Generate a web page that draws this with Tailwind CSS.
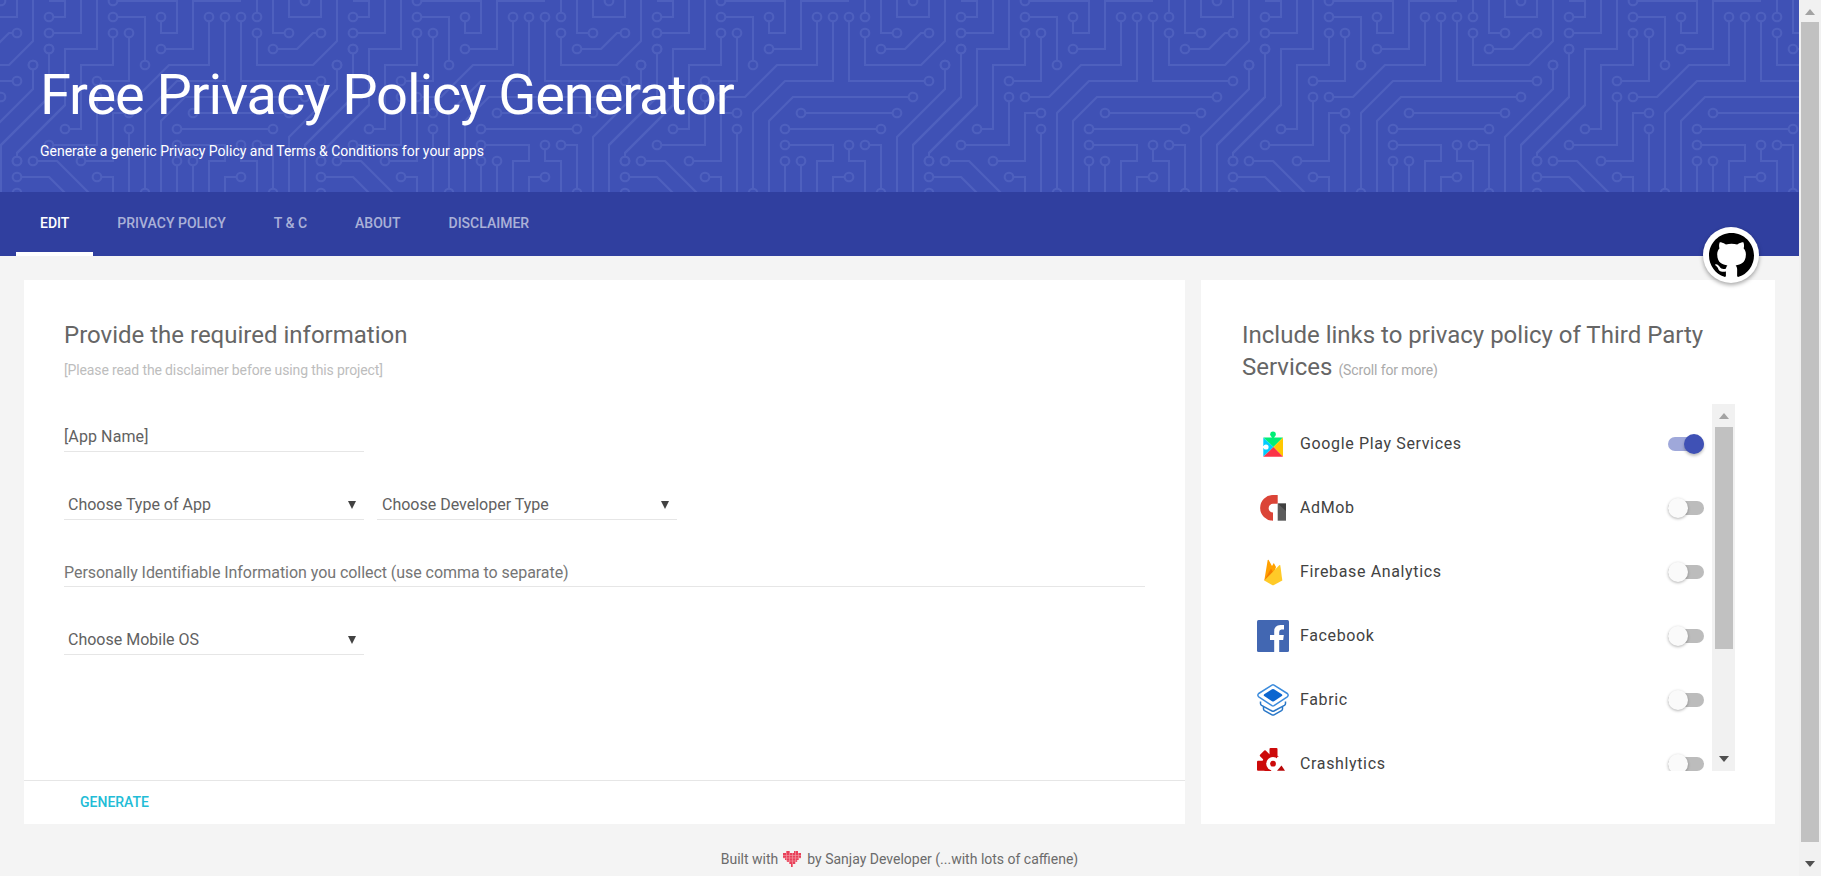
<!DOCTYPE html>
<html lang="en">
<head>
<meta charset="utf-8">
<title>Free Privacy Policy Generator</title>
<script src="https://cdn.jsdelivr.net/npm/@tailwindcss/browser@4"></script>
</head>
<body class="h-[876px] w-[1821px] overflow-hidden bg-[#f4f4f4] font-['Roboto',sans-serif] text-[#424242]">
<div class="flex h-[876px]">
  <div class="flex w-[1799px] shrink-0 flex-col">
    <header class="relative h-[192px] shrink-0 bg-[#3f51b5] px-10 pt-[71px] text-white">
      <svg class="absolute inset-0 h-full w-full">
        <defs>
          <g id="circuit" transform="translate(1 1) scale(16)" fill="none" stroke="#4e60be" stroke-width=".125">
            <path d="M3 0H4V1H3M7 0H11V2H10V1M15 0H12V3H10M16-1V1M17-1V2H18M18-1V1H20V-1M19-1V0M16 2V4H19.5L21 2.5V-1M20 2H19.5L18.5 3H17M3 2H5V-1M6-1V3H4V6.5L1 9.5V10M3 3V6L0 9V13M22 3V6L19 9V13M21 4V5.5L18 8.5V13M7 1H9V4M7 2V4H5V8H4M8 2V5H6M6 6V9H3M7 6H8.5L10.5 4H13V1M14 1V5H11L9 7V12M15 1V5H20M19 6H11.500L10 7.500V13M12 7H18M11 8H17M8 7H7V10H5M8 8V13M11 9H14V10H13V13M15 9V10H16V13M16 9H17V12M11 10V13M12 10V13M15 11H14V13M2 10H3.5L6.500 13M1 11H3L5 13M6 11H7V13M23 3V6.500L20 9.500V10"/>
            <g fill="#3f51b5">
              <circle cx="3" cy="1" r=".27"/><circle cx="7" cy="0" r=".27"/><circle cx="10" cy="1" r=".27"/><circle cx="10" cy="3" r=".27"/><circle cx="16" cy="1" r=".27"/><circle cx="18" cy="2" r=".27"/><circle cx="19" cy="0" r=".27"/><circle cx="16" cy="2" r=".27"/><circle cx="20" cy="2" r=".27"/><circle cx="17" cy="3" r=".27"/><circle cx="3" cy="2" r=".27"/><circle cx="1" cy="10" r=".27"/><circle cx="20" cy="10" r=".27"/><circle cx="3" cy="3" r=".27"/><circle cx="22" cy="3" r=".27"/><circle cx="21" cy="4" r=".27"/><circle cx="2" cy="4" r=".27"/><circle cx="7" cy="1" r=".27"/><circle cx="9" cy="4" r=".27"/><circle cx="7" cy="2" r=".27"/><circle cx="4" cy="8" r=".27"/><circle cx="8" cy="2" r=".27"/><circle cx="6" cy="5" r=".27"/><circle cx="6" cy="6" r=".27"/><circle cx="3" cy="9" r=".27"/><circle cx="7" cy="6" r=".27"/><circle cx="13" cy="1" r=".27"/><circle cx="14" cy="1" r=".27"/><circle cx="9" cy="12" r=".27"/><circle cx="15" cy="1" r=".27"/><circle cx="20" cy="5" r=".27"/><circle cx="19" cy="6" r=".27"/><circle cx="12" cy="7" r=".27"/><circle cx="18" cy="7" r=".27"/><circle cx="11" cy="8" r=".27"/><circle cx="17" cy="8" r=".27"/><circle cx="8" cy="7" r=".27"/><circle cx="5" cy="10" r=".27"/><circle cx="8" cy="8" r=".27"/><circle cx="11" cy="9" r=".27"/><circle cx="15" cy="9" r=".27"/><circle cx="16" cy="9" r=".27"/><circle cx="17" cy="12" r=".27"/><circle cx="11" cy="10" r=".27"/><circle cx="12" cy="10" r=".27"/><circle cx="15" cy="11" r=".27"/><circle cx="2" cy="10" r=".27"/><circle cx="1" cy="11" r=".27"/><circle cx="6" cy="11" r=".27"/><circle cx="1" cy="12" r=".27"/>
            </g>
          </g>
          <pattern id="board" width="304" height="304" patternUnits="userSpaceOnUse"><use href="#circuit"/><use href="#circuit" x="-304"/></pattern>
        </defs>
        <rect width="1799" height="192" fill="url(#board)"/>
      </svg>
      <h1 class="relative text-[56px] leading-[48px] tracking-[-1.12px] whitespace-nowrap">Free Privacy Policy Generator</h1>
      <p class="relative mt-5 text-[14px] leading-6 whitespace-nowrap">Generate a generic Privacy Policy and Terms &amp; Conditions for your apps</p>
    </header>
    <nav class="relative flex h-16 shrink-0 bg-[#303f9f] pl-4 text-[14px] leading-[62px] font-medium text-white/60">
      <a class="border-b-4 border-white px-6 text-white">EDIT</a>
      <a class="px-6">PRIVACY POLICY</a>
      <a class="px-6">T &amp; C</a>
      <a class="px-6">ABOUT</a>
      <a class="px-6">DISCLAIMER</a>
      <div class="absolute top-[35px] left-[1703px] flex h-14 w-14 items-center justify-center rounded-full bg-white shadow-[0_2px_4px_rgba(0,0,0,.35)]">
        <svg class="h-[45px] w-[45px]" viewBox="0 0 16 16"><path d="M8 0C3.58 0 0 3.58 0 8c0 3.54 2.29 6.53 5.47 7.59.4.07.55-.17.55-.38 0-.19-.01-.82-.01-1.490-2.010.37-2.530-.490-2.690-.940-.090-.230-.480-.940-.820-1.130-.280-.150-.680-.520-.010-.530.630-.010 1.080.580 1.230.820.720 1.210 1.870.870 2.330.660.070-.520.280-.870.510-1.070-1.780-.200-3.640-.890-3.640-3.950 0-.870.310-1.590.820-2.150-.080-.200-.360-1.020.080-2.120 0 0 .670-.210 2.200.820.640-.180 1.320-.270 2-.270s1.360.090 2 .270c1.530-1.040 2.200-.820 2.200-.820.440 1.100.160 1.920.080 2.120.510.560.820 1.270.820 2.150 0 3.070-1.870 3.750-3.650 3.950.290.250.540.730.540 1.480 0 1.070-.010 1.930-.010 2.200 0 .210.150.460.550.380A8.010 8.010 0 0 0 16 8c0-4.420-3.580-8-8-8z"/></svg>
      </div>
    </nav>
    <main class="flex h-[568px] shrink-0 gap-4 px-6 pt-6">
      <section class="flex w-[1161px] flex-col bg-white">
        <div class="h-[500px] px-10 pt-[39px]">
          <h2 class="text-[24px] leading-8 text-[#666]">Provide the required information</h2>
          <p class="mt-[7px] text-[14px] leading-6 tracking-[-.13px] text-[#bdbdbd]">[Please read the disclaimer before using this project]</p>
          <div class="mt-[43px] h-[27px] w-[300px] border-b border-[#e6e6e6] text-[16px] leading-6 tracking-[.1px] text-[#616161]">[App Name]</div>
          <div class="mt-[41px] flex gap-[13px] text-[16px] leading-6 text-[#616161]">
            <div class="flex h-[27px] w-[300px] justify-between border-b border-[#e6e6e6] pr-2 pl-1"><span>Choose Type of App</span><svg class="mt-2 h-2 w-2" viewBox="0 0 8 8"><path d="M0 0H8L4 8Z" fill="#424242"/></svg></div>
            <div class="flex h-[27px] w-[300px] justify-between border-b border-[#e6e6e6] pr-2 pl-[5px]"><span>Choose Developer Type</span><svg class="mt-2 h-2 w-2" viewBox="0 0 8 8"><path d="M0 0H8L4 8Z" fill="#424242"/></svg></div>
          </div>
          <div class="mt-[41px] h-[26px] border-b border-[#e6e6e6] text-[16px] leading-6 tracking-[-.05px] text-[#757575]">Personally Identifiable Information you collect (use comma to separate)</div>
          <div class="mt-[41px] flex h-[27px] w-[300px] justify-between border-b border-[#e6e6e6] pr-2 pl-1 text-[16px] leading-6 text-[#616161]"><span>Choose Mobile OS</span><svg class="mt-2 h-2 w-2" viewBox="0 0 8 8"><path d="M0 0H8L4 8Z" fill="#424242"/></svg></div>
        </div>
        <div class="h-[44px] border-t border-[#e6e6e6] pl-14 text-[14px] leading-[42px] font-medium text-[#22bcd6]">GENERATE</div>
      </section>
      <section class="w-[574px] bg-white pt-[39px] pl-[41px]">
        <h2 class="h-16 text-[24px] leading-8 whitespace-nowrap text-[#666]">Include links to privacy policy of Third Party<br>Services <span class="text-[14px] leading-none tracking-[-.13px] text-[#aaa]">(Scroll for more)</span></h2>
        <div class="mt-[21px] flex h-[367px] w-[493px] overflow-hidden">
          <ul class="mt-2 w-[470px] shrink-0 text-[16px] tracking-[.64px] text-[#424242]">
            <li class="flex h-16 items-center pr-2 pl-[15px]"><svg class="h-8 w-8" viewBox="0 0 32 32"><path d="M6.300 9.500L16.500 19 6.300 28.700Z" fill="#00cdff"/><path d="M6.300 9.500H26L16.500 19Z" fill="#00ee76"/><circle cx="16" cy="6.200" r="2.800" fill="#00ee76"/><path d="M14.800 7h2.400v4h-2.400z" fill="#00ee76"/><path d="M26 9.500V28.700L16.500 19Z" fill="#ffc800"/><path d="M6.300 28.700L16.500 19 26 28.700Z" fill="#fb3347"/><circle cx="9" cy="19" r="2.600" fill="#fff"/><path d="M6 18h3v2H6z" fill="#fff"/></svg><span class="ml-[11px] flex-1">Google Play Services</span><span class="relative h-5 w-9"><i class="absolute top-[3px] h-3.5 w-9 rounded-full bg-[#9fa8da]"></i><i class="absolute right-0 h-5 w-5 rounded-full bg-[#3f51b5] shadow-[0_2px_3px_rgba(0,0,0,.25)]"></i></span></li>
            <li class="flex h-16 items-center pr-2 pl-[15px]"><svg class="h-8 w-8" viewBox="0 0 32 32"><path d="M20.700 3H16A12.800 12.800 0 0 0 16 28.700V20.500A4.300 4.300 0 0 1 16 11.800H20.700Z" fill="#db4437"/><path d="M20.700 11.600H29V28.700H20.700Z" fill="#5c5c5c"/><path d="M20.700 11.600H29V19Z" fill="#404040"/></svg><span class="ml-[11px] flex-1">AdMob</span><span class="relative h-5 w-9"><i class="absolute top-[3px] h-3.5 w-9 rounded-full bg-[#bcbcbc]"></i><i class="absolute left-0 h-5 w-5 rounded-full bg-[#fafafa] shadow-[0_1px_3px_rgba(0,0,0,.3)]"></i></span></li>
            <li class="flex h-16 items-center pr-2 pl-[15px]"><svg class="h-8 w-8" viewBox="0 0 32 32"><path d="M7.300 24.500L10.700 4 11.500 3.700 15 10 16.800 7 19 11 16 20Z" fill="#ffa000"/><path d="M7.300 24.500L14 12.500 16.500 17Z" fill="#f57c00"/><path d="M7.300 24.500L22.500 9 23.300 9.300 25.300 24.500 16.500 29.200Q16 29.400 15.500 29.200Z" fill="#ffca28"/></svg><span class="ml-[11px] flex-1">Firebase Analytics</span><span class="relative h-5 w-9"><i class="absolute top-[3px] h-3.5 w-9 rounded-full bg-[#bcbcbc]"></i><i class="absolute left-0 h-5 w-5 rounded-full bg-[#fafafa] shadow-[0_1px_3px_rgba(0,0,0,.3)]"></i></span></li>
            <li class="flex h-16 items-center pr-2 pl-[15px]"><svg class="h-8 w-8" viewBox="0 0 32 32"><rect width="32" height="32" rx="1.500" fill="#4267b2"/><path d="M17.200 32V20H13V15H17.200V11.500Q17.200 5 23.500 5H27V9.500H24.500Q22.200 9.500 22.200 12V15H26.800L26.200 20H22.200V32Z" fill="#fff"/></svg><span class="ml-[11px] flex-1">Facebook</span><span class="relative h-5 w-9"><i class="absolute top-[3px] h-3.5 w-9 rounded-full bg-[#bcbcbc]"></i><i class="absolute left-0 h-5 w-5 rounded-full bg-[#fafafa] shadow-[0_1px_3px_rgba(0,0,0,.3)]"></i></span></li>
            <li class="flex h-16 items-center pr-2 pl-[15px]"><svg class="h-8 w-8" viewBox="0 0 32 32" fill="none" stroke="#2877c8" stroke-width="1.500" stroke-linejoin="round"><path d="M6.500 22.500V25Q6.500 26 7.500 26.600L15 30.800Q16 31.400 17 30.800L24.500 26.600Q25.500 26 25.500 25V22.500"/><path d="M3.500 17.500V19.500Q3.500 20.700 4.600 21.400L15 27Q16 27.600 17 27L27.400 21.400Q28.500 20.700 28.500 19.500V17.500" fill="#fff"/><path d="M15 1.100Q16 .6 17 1.100L30.300 9.500Q32 11.200 30.300 12.800L17 21.600Q16 22.200 15 21.600L1.700 12.800Q0 11.200 1.700 9.500Z" fill="#fff" stroke="#3b8bdc"/><path d="M15 5.200Q16 4.700 17 5.200L24.800 10.300Q25.800 11.200 24.800 12L17 17.300Q16 17.800 15 17.300L7.200 12Q6.200 11.200 7.200 10.300Z" fill="#0b66d0" stroke="none"/></svg><span class="ml-[11px] flex-1">Fabric</span><span class="relative h-5 w-9"><i class="absolute top-[3px] h-3.5 w-9 rounded-full bg-[#bcbcbc]"></i><i class="absolute left-0 h-5 w-5 rounded-full bg-[#fafafa] shadow-[0_1px_3px_rgba(0,0,0,.3)]"></i></span></li>
            <li class="flex h-16 items-center pr-2 pl-[15px]"><svg class="h-8 w-8" viewBox="0 0 32 32"><g fill="#cc0a0a"><rect x="12.500" y="0" width="8" height="10" rx="1"/><rect x="4" y="3.500" width="8" height="8" rx="1" transform="rotate(-45 8 7.500)"/><rect x="0" y="12.700" width="10" height="10" rx="1"/><circle cx="15" cy="16" r="10"/></g><path d="M19 12L20.500 8.700H32V32H14V23Z" fill="#fff"/><circle cx="16" cy="15.700" r="6.800" fill="#fff"/><circle cx="16" cy="15.700" r="2.900" fill="#cc0a0a"/><path d="M20 22.700L24.500 17.500 28 22.700Z" fill="#b90808"/></svg><span class="ml-[11px] flex-1">Crashlytics</span><span class="relative h-5 w-9"><i class="absolute top-[3px] h-3.5 w-9 rounded-full bg-[#bcbcbc]"></i><i class="absolute left-0 h-5 w-5 rounded-full bg-[#fafafa] shadow-[0_1px_3px_rgba(0,0,0,.3)]"></i></span></li>
          </ul>
          <div class="flex h-full w-[23px] flex-col items-center bg-[#f1f1f1]">
            <svg class="mt-[9px] h-[6px] w-[10px]" viewBox="0 0 10 6"><path d="M0 6L5 0 10 6Z" fill="#a3a3a3"/></svg>
            <div class="mt-[8px] h-[222px] w-[18px] bg-[#c1c1c1]"></div>
            <svg class="mt-[107px] h-[6px] w-[10px]" viewBox="0 0 10 6"><path d="M0 0H10L5 6Z" fill="#505050"/></svg>
          </div>
        </div>
      </section>
    </main>
    <footer class="flex items-center justify-center pt-[23px] text-[14px] leading-6 text-[#6b6b6b]">
      <span>Built with</span>
      <svg class="mr-[6px] ml-[5px] h-[16px] w-[18px]" viewBox="0 0 18 16"><path d="M3 0H7V2H11V0H15V2H18V7H16V9H14V11H12V13H10V16H8V13H6V11H4V9H2V7H0V2H3Z" fill="#e8405a"/><path d="M3.500 0V10M6.500 0V13M9.500 2V16M12.500 0V13M15.500 2V9M0 4.500H18M0 7H18M3 10H15" stroke="#f4a0a8" stroke-width=".6"/></svg>
      <span>by Sanjay Developer (...with lots of caffiene)</span>
    </footer>
  </div>
  <div class="flex w-[22px] flex-col items-center bg-[#f1f1f1]">
    <svg class="mt-[9px] h-[6px] w-[10px]" viewBox="0 0 10 6"><path d="M0 6L5 0 10 6Z" fill="#a3a3a3"/></svg>
    <div class="mt-[7px] h-[820px] w-[18px] bg-[#c1c1c1]"></div>
    <svg class="mt-[19px] h-[6px] w-[10px]" viewBox="0 0 10 6"><path d="M0 0H10L5 6Z" fill="#505050"/></svg>
  </div>
</div>
</body>
</html>
